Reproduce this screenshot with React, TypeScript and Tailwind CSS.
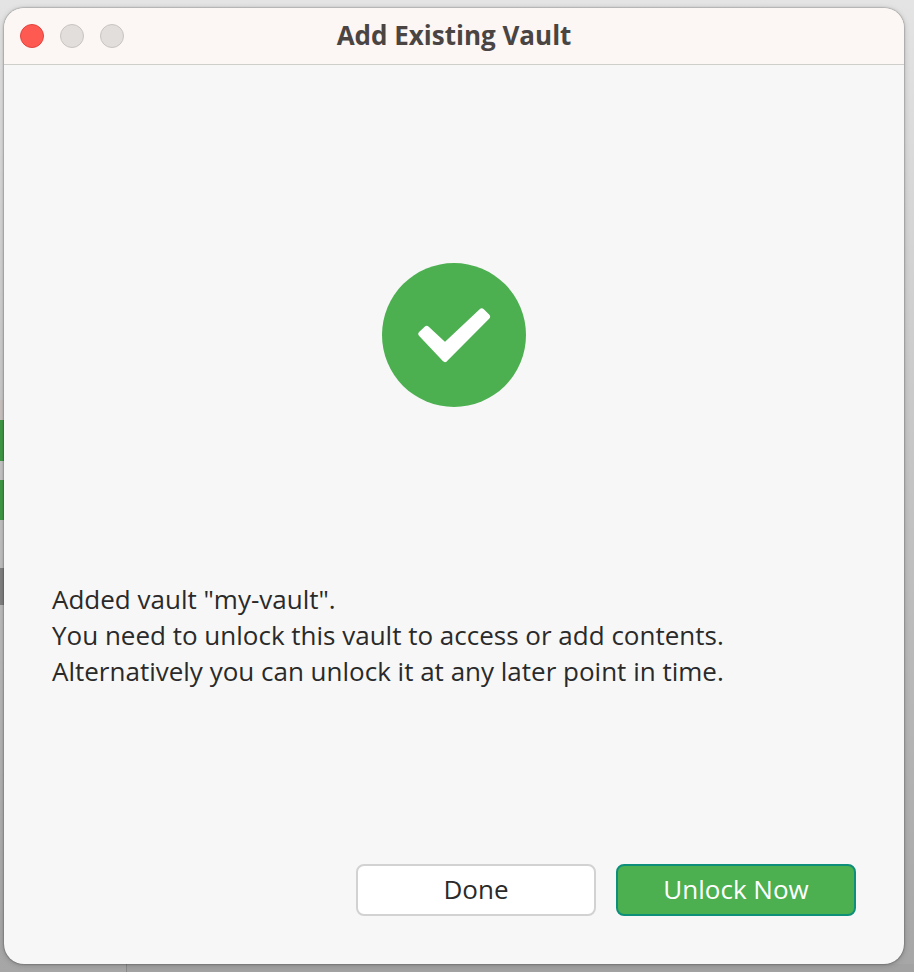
export default function App() {
  return (
    <div className="relative w-[914px] h-[972px] overflow-hidden bg-gradient-to-b from-[#e4e4e4] via-[#c4c4c4] to-[#a6a6a6] pt-2 pl-1 pr-[10px] pb-2 font-['Open_Sans','Noto_Sans',sans-serif]">
      {/* Bits of the app behind the dialog */}
      <div className="absolute left-0 top-[400px] w-1 h-5 bg-[#c9c4c0]" />
      <div className="absolute left-0 top-[420px] w-1 h-[41px] bg-[#3f9a45]" />
      <div className="absolute left-0 top-[480px] w-1 h-[40px] bg-[#3f9a45]" />
      <div className="absolute left-0 top-[568px] w-1 h-[37px] bg-[#808080]" />
      <div className="absolute left-[126px] top-[964px] w-[788px] h-2 border-l border-[#8a8a8a] bg-[#a2a2a2]" />

      {/* Dialog window */}
      <div className="relative flex flex-col w-[900px] h-[956px] rounded-[20px] overflow-hidden bg-[#f7f7f7] shadow-[0_0_2px_rgba(0,0,0,0.55),0_1px_6px_rgba(0,0,0,0.2)]">
        <div className="flex items-center h-[57px] shrink-0 bg-[#fcf7f4] border-b border-[#d0cecb] relative">
          <div className="flex gap-4 pl-4">
            <div className="w-6 h-6 rounded-full bg-[#ff5a52] border border-[#e0443e]" />
            <div className="w-6 h-6 rounded-full bg-[#e2dedb] border border-[#c8c4c0]" />
            <div className="w-6 h-6 rounded-full bg-[#e2dedb] border border-[#c8c4c0]" />
          </div>
          <div className="absolute inset-0 flex items-center justify-center pb-0.5 text-[26px] font-bold text-[#4a4543]">
            Add Existing Vault
          </div>
        </div>

        <div className="flex flex-col flex-1 px-12">
          <div className="flex justify-center pt-[198px]">
            <div className="flex items-center justify-center w-36 h-36 rounded-full bg-[#4caf50]">
              <svg width="144" height="144" viewBox="382 263 144 144" fill="none">
                <path
                  d="M426.7 329 L421.4 334 L445 359 L487 316.7 L481.7 311.4 L445 346 Z"
                  fill="#ffffff"
                  stroke="#ffffff"
                  strokeWidth="6"
                  strokeLinejoin="round"
                />
              </svg>
            </div>
          </div>

          <div className="pt-[174px] text-[26px] leading-9 text-[#2a2a2a]">
            <p>Added vault "my-vault".</p>
            <p>You need to unlock this vault to access or add contents.</p>
            <p>Alternatively you can unlock it at any later point in time.</p>
          </div>

          <div className="flex justify-end gap-5 mt-auto pb-12">
            <button className="w-60 h-[52px] pb-0.5 rounded-lg bg-white border-2 border-[#d2d2d2] text-[26px] text-[#2a2a2a]">
              Done
            </button>
            <button className="w-60 h-[52px] pb-0.5 rounded-lg bg-[#4caf50] border-2 border-[#0e8f7a] text-[26px] text-white">
              Unlock Now
            </button>
          </div>
        </div>
      </div>
    </div>
  );
}
